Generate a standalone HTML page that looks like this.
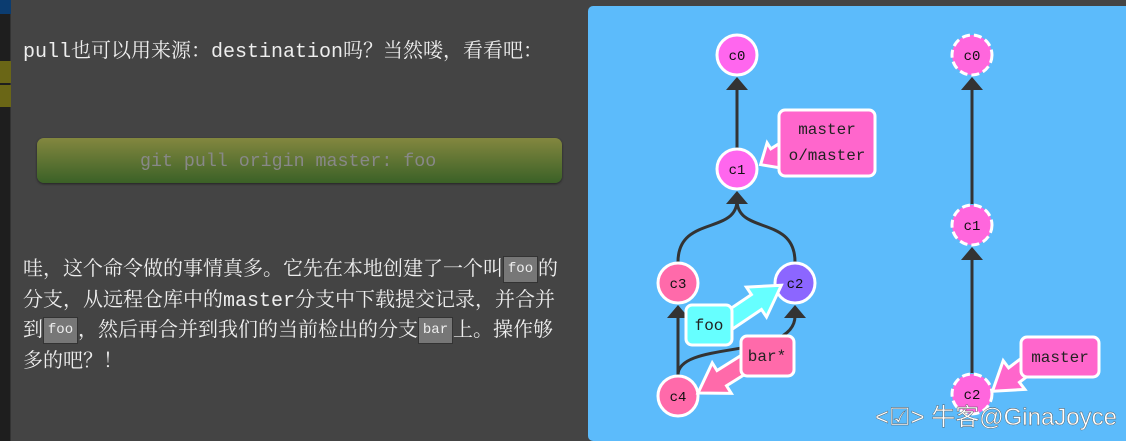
<!DOCTYPE html>
<html><head><meta charset="utf-8"><style>
*{margin:0;padding:0;box-sizing:border-box}
html,body{width:1126px;height:441px;overflow:hidden}
body{background:#444;position:relative;font-family:"Liberation Mono","Noto Serif CJK SC",monospace;color:#eee}
.side{position:absolute;left:0;top:0;width:11px;height:441px;background:#1e1e1e;border-right:1px solid #333}
.p{position:absolute;left:23px;font-size:20px;white-space:nowrap}
.code{display:inline-block;background:#777;border:1px solid #333;font-size:14px;padding:0;width:35px;text-align:center;line-height:25px;height:27px;color:#eee;vertical-align:middle}
.btn{position:absolute;left:37px;top:138px;width:525px;height:45px;border-radius:7px;background:linear-gradient(#83873f,#3b6127);box-shadow:0 1px 2px #222}
.btn span{position:absolute;left:103px;top:14px;font-size:18.3px;color:#888}
</style></head><body>
<div class="side"><div style="position:absolute;left:0;top:0;width:11px;height:14px;background:#0b3c70"></div><div style="position:absolute;left:0;top:61px;width:11px;height:22px;background:#6a6616"></div><div style="position:absolute;left:0;top:85px;width:11px;height:22px;background:#6a6616"></div></div>
<div class="p" style="top:34px">pull也可以用来源：destination吗？当然喽，看看吧：</div>
<div class="btn"><span>git pull origin master: foo</span></div>
<div class="p" style="top:256px;line-height:30.5px">哇，这个命令做的事情真多。它先在本地创建了一个叫<span class="code">foo</span>的<br>分支，从远程仓库中的master分支中下载提交记录，并合并<br>到<span class="code">foo</span>，然后再合并到我们的当前检出的分支<span class="code">bar</span>上。操作够<br>多的吧？！</div>
<svg style="position:absolute;left:0;top:0" width="1126" height="441" font-family="Liberation Mono, monospace">
<rect x="588" y="6" width="538" height="435" rx="5" fill="#5cbbfb"/>
<rect x="1100" y="6" width="26" height="435" fill="#5cbbfb"/>
<g stroke="#333" stroke-width="3" fill="none">
<line x1="737" y1="88" x2="737" y2="148"/>
<path d="M678,262 C678,215 737,235 737,200"/>
<path d="M795,262 C795,215 737,235 737,200"/>
<line x1="678" y1="375" x2="678" y2="315"/>
<path d="M678,375 C678,340 795,360 795,316"/>
<line x1="972" y1="88" x2="972" y2="204"/>
<line x1="972" y1="257" x2="972" y2="373"/>
</g>
<g fill="#333">
<polygon points="737,77 726,90 748,90"/>
<polygon points="737,191 726,204 748,204"/>
<polygon points="678,305 667,318 689,318"/>
<polygon points="795,305 784,318 806,318"/>
<polygon points="972,77 961,90 983,90"/>
<polygon points="972,247 961,260 983,260"/>
</g>
<g stroke="#fff" stroke-width="3">
<circle cx="737" cy="55" r="20" fill="#ff66ee"/>
<circle cx="737" cy="169" r="20" fill="#ff66ee"/>
<circle cx="678" cy="283" r="20" fill="#ff6aaa"/>
<circle cx="795" cy="283" r="20" fill="#8c66ff"/>
<circle cx="678" cy="396" r="20" fill="#ff6aaa"/>
<g stroke-dasharray="8 4"><circle cx="972" cy="55" r="20" fill="#ff66dd"/>
<circle cx="972" cy="225" r="20" fill="#ff66dd"/>
<circle cx="972" cy="394" r="20" fill="#ff66dd"/></g>
</g>
<g font-size="14" text-anchor="middle" fill="#111">
<text x="737" y="60">c0</text><text x="737" y="174">c1</text><text x="678" y="288">c3</text><text x="795" y="288">c2</text><text x="678" y="401">c4</text>
<text x="972" y="60">c0</text><text x="972" y="230">c1</text><text x="972" y="399">c2</text>
</g>
<g stroke="#fff" stroke-width="3" stroke-linejoin="miter">
<g transform="translate(792,145) rotate(148)"><polygon fill="#ff66cc" points="0,-8 20,-8 20,-15 37,0 20,15 20,8 0,8"/></g>
<g transform="translate(715,330) rotate(-34)"><polygon fill="#66ffff" points="0,-9 50,-9 50,-18 80,0 50,18 50,9 0,9"/></g>
<g transform="translate(754,358) rotate(148)"><polygon fill="#ff6aaa" points="0,-9 38,-9 38,-18 66,0 38,18 38,9 0,9"/></g>
<g transform="translate(1034,360) rotate(143)"><polygon fill="#ff66cc" points="0,-9 25,-9 25,-18 52,0 25,18 25,9 0,9"/></g>
<rect x="779" y="110" width="96" height="66" rx="6" fill="#ff66cc"/>
<rect x="686" y="305" width="46" height="40" rx="6" fill="#66ffff"/>
<rect x="741" y="336" width="53" height="40" rx="6" fill="#ff6aaa"/>
<rect x="1021" y="337" width="78" height="40" rx="6" fill="#ff66cc"/>
</g>
<g font-size="16" text-anchor="middle" fill="#222">
<text x="827" y="134">master</text><text x="827" y="160">o/master</text>
<text x="709" y="330">foo</text><text x="767" y="361">bar*</text><text x="1060" y="362">master</text>
</g>
<text x="1117" y="425" text-anchor="end" font-family="Liberation Sans, Noto Sans CJK SC, sans-serif" font-size="24" fill="#fff" stroke="#555" stroke-width="0.4">&lt;☑&gt; 牛客@GinaJoyce</text>
</svg>
</body></html>
